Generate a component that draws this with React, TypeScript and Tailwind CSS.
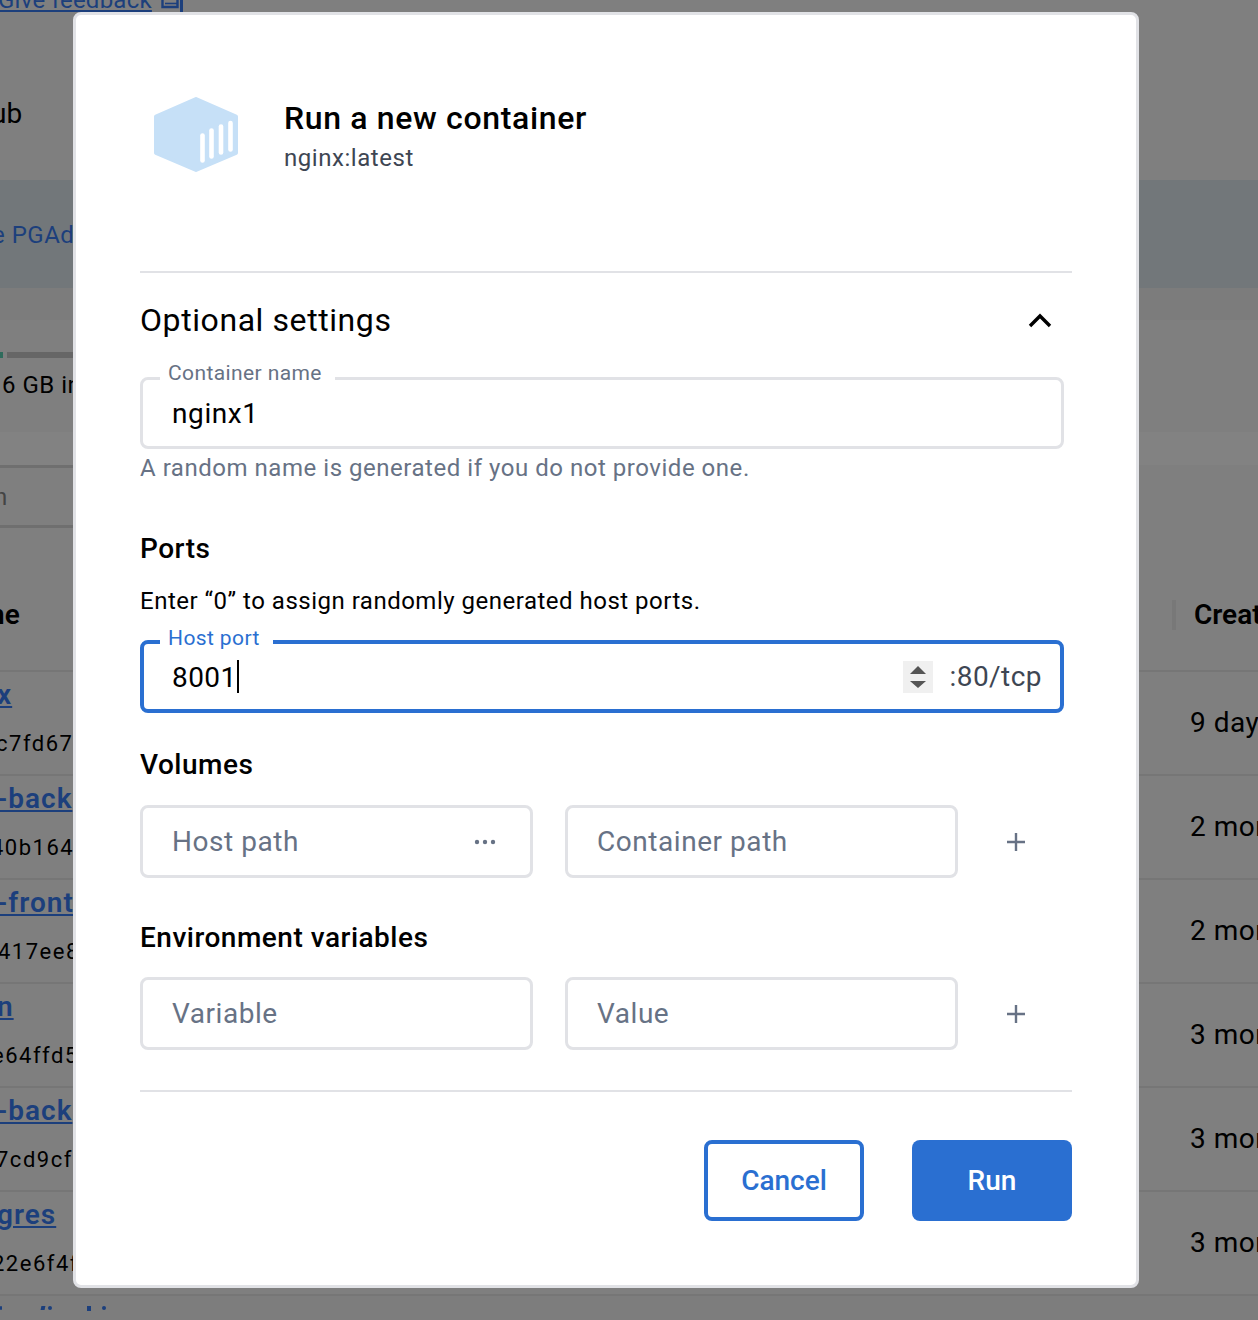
const ROWS = [
  { name: 'x', hash: 'c7fd67', hashClass: '-ml-[4px]', age: '9 days' },
  { name: '-back', hash: '40b164', hashClass: '-ml-[9px]', age: '2 months' },
  { name: '-front', hash: '417ee8', hashClass: '-ml-[2px]', age: '2 months' },
  { name: 'n', hash: 'e64ffd5', hashClass: '-ml-[8px]', age: '3 months' },
  { name: '-back', hash: '7cd9cf', hashClass: '-ml-[4px]', age: '3 months' },
  { name: 'gres', hash: '22e6f4f', hashClass: '-ml-[8px]', age: '3 months' },
];

function TableRow({ name, hash, hashClass, age }: { name: string; hash: string; hashClass: string; age: string }) {
  return (
    <div className="h-[104px] flex justify-between border-b-2 border-[#767676]">
      <div className="w-[73px] overflow-hidden whitespace-nowrap">
        <div className="h-[54px] pt-[5px] -ml-[3px] leading-[36px] text-[28px] font-semibold tracking-[1px] text-[#1c3f7c] underline">{name}</div>
        <div className={`h-[36px] leading-[36px] text-[22px] tracking-[1.5px] text-black ${hashClass}`}>{hash}</div>
      </div>
      <div className="w-[68px] overflow-hidden whitespace-nowrap pt-[33px] leading-[36px] text-[28px] tracking-[0.5px] text-black">{age}</div>
    </div>
  );
}

// Dimmed page that sits behind the dialog
function Backdrop() {
  return (
    <div className="bg-[#7f7f7f] h-[1320px] overflow-hidden">
      <div className="h-[180px]">
        <div className="h-[12px] overflow-hidden flex items-end">
          <span className="-ml-[2px] -mb-[3px] leading-[30px] text-[24px] tracking-[0.25px] text-[#1c3f7c] underline whitespace-nowrap">Give feedback</span>
          <svg width="22" height="12" viewBox="0 0 22 12" className="ml-[9px] shrink-0">
            <path d="M1.5 0v7h15V0" fill="none" stroke="#1c3f7c" strokeWidth="2.4" />
            <path d="M20.5 0v12" stroke="#1c3f7c" strokeWidth="3" />
            <path d="M4 3.5h12" stroke="#1c3f7c" strokeWidth="1.6" />
          </svg>
        </div>
        <div className="mt-[84px] -ml-[9px] leading-[36px] text-[28px] text-black">ub</div>
      </div>
      <div className="h-[108px] pt-[2px] bg-[#72777a] flex items-center">
        <span className="text-[24px] tracking-[0.5px] text-[#1c3f7c] -ml-[8px] whitespace-nowrap">e PGAd</span>
      </div>
      <div className="h-[32px] bg-[#7c7c7c]" />
      <div className="h-[112px] pt-[32px]">
        <div className="flex gap-[4px] h-[6px] w-[73px]">
          <div className="w-[3px] bg-[#2f6b5c]" />
          <div className="flex-1 bg-[#666666]" />
        </div>
        <div className="mt-[9px] ml-[2px] leading-[36px] text-[24px] tracking-[0.5px] text-black whitespace-nowrap">6 GB in</div>
      </div>
      <div className="h-[33px] bg-[#828282]" />
      <div className="h-[63px] w-[73px] border-y-[3px] border-[#6f6f6f] flex items-center">
        <span className="text-[24px] text-[#444444] -ml-[6px]">n</span>
      </div>
      <div className="h-[144px] flex justify-between items-center border-b-2 border-[#767676] pt-[31px]">
        <span className="text-[28px] font-semibold text-black -ml-[11px]">ne</span>
        <div className="flex items-center w-[86px] overflow-hidden whitespace-nowrap">
          <div className="w-[4px] h-[30px] mr-[18px] shrink-0 bg-[#787878]" />
          <span className="text-[28px] font-semibold text-black">Creat</span>
        </div>
      </div>
      {ROWS.map((row, i) => (
        <TableRow key={i} {...row} />
      ))}
      {/* tops of the next row's link, cut off by the scroll area */}
      <div className="h-[24px] bg-[#7d7d7d] pt-[10px] flex items-start">
        <div className="w-[2px] h-[4px] rounded-full bg-[#1c3f7c]" />
        <div className="ml-[39px] w-[4px] h-[4px] -skew-x-12 bg-[#1c3f7c]" />
        <div className="ml-[3px] w-[4px] h-[4px] rounded-full bg-[#1c3f7c]" />
        <div className="ml-[35px] w-[4px] h-[5px] bg-[#1c3f7c]" />
        <div className="ml-[11px] w-[4px] h-[4px] rounded-full bg-[#1c3f7c]" />
      </div>
    </div>
  );
}

function LabelledBox({ label, focused, children }: { label: string; focused?: boolean; children: React.ReactNode }) {
  return (
    <div className={focused ? 'relative h-[73px] rounded-[8px] border-[4px] border-[#2a6fd1] flex items-center pl-[28px] pr-[18px]' : 'relative h-[72px] rounded-[8px] border-[3px] border-[#e1e2e6] flex items-center pl-[29px] pr-[18px]'}>
      <span className={focused ? 'absolute left-[16px] -top-[19px] pl-[8px] pr-[13px] bg-white leading-[26px] text-[21px] tracking-[0.4px] text-[#2a6fd1]' : 'absolute left-[17px] -top-[20px] pl-[8px] pr-[13px] bg-white leading-[26px] text-[21px] tracking-[0.4px] text-[#677285]'}>
        {label}
      </span>
      {children}
    </div>
  );
}

function PathInput({ placeholder, dots }: { placeholder: string; dots?: boolean }) {
  return (
    <div className="w-[393px] h-[73px] rounded-[8px] border-[3px] border-[#e1e2e6] flex items-center justify-between pl-[29px] pr-[34px]">
      <span className="text-[28px] tracking-[0.55px] text-[#677285]">{placeholder}</span>
      {dots && (
        <svg width="22" height="6" viewBox="0 0 22 6">
          <circle cx="3" cy="3" r="2.2" fill="#677285" />
          <circle cx="11" cy="3" r="2.2" fill="#677285" />
          <circle cx="19" cy="3" r="2.2" fill="#677285" />
        </svg>
      )}
    </div>
  );
}

function PathRow({ first, second, dots }: { first: string; second: string; dots?: boolean }) {
  return (
    <div className="flex items-center gap-[32px]">
      <PathInput placeholder={first} dots={dots} />
      <PathInput placeholder={second} />
      <svg width="20" height="20" viewBox="0 0 20 20" className="ml-[16px]">
        <path d="M10 1v18M1 10h18" stroke="#677285" strokeWidth="2.4" />
      </svg>
    </div>
  );
}

function SectionTitle({ children, className }: { children: React.ReactNode; className: string }) {
  return <div className={`h-[36px] leading-[36px] text-[28px] font-medium tracking-[0.5px] text-black ${className}`}>{children}</div>;
}

export default function App() {
  return (
    <div className="relative h-[1320px] overflow-hidden font-['Roboto',sans-serif]">
      <Backdrop />

      {/* Dialog */}
      <div className="absolute left-[73px] top-[12px] w-[1066px] h-[1276px] bg-white border-[3px] border-[#e1e2e6] rounded-[8px] px-[64px]">
        <div className="h-[256px] pt-[82px] flex items-start">
          <svg width="84" height="75" viewBox="0 0 84 75" className="ml-[14px] shrink-0">
            <path d="M42 2 82 19.5V56L42 73 2 56V19.5Z" fill="#c6e0f7" stroke="#c6e0f7" strokeWidth="4" strokeLinejoin="round" />
            <g stroke="#ffffff" strokeWidth="4.6" strokeLinecap="round">
              <line x1="48.5" y1="38.5" x2="48.5" y2="63.5" />
              <line x1="57.5" y1="33.5" x2="57.5" y2="59.5" />
              <line x1="67" y1="29.5" x2="67" y2="55.5" />
              <line x1="76.5" y1="26" x2="76.5" y2="52.5" />
            </g>
          </svg>
          <div className="ml-[46px] -mt-[1px]">
            <div className="h-[44px] leading-[44px] text-[32px] font-medium tracking-[0.65px] text-black">Run a new container</div>
            <div className="leading-[36px] text-[24px] tracking-[0.55px] text-[#3e4653]">nginx:latest</div>
          </div>
        </div>

        <div className="h-[2px] bg-[#e1e2e6]" />

        <div className="h-[94px] flex items-center justify-between pr-[20px]">
          <span className="text-[32px] tracking-[0.58px] text-black">Optional settings</span>
          <svg width="24" height="15" viewBox="0 0 24 15">
            <path d="M2 13 12 3l10 10" fill="none" stroke="#000000" strokeWidth="3.4" />
          </svg>
        </div>

        <div className="mt-[10px] w-[924px]">
          <LabelledBox label="Container name">
            <span className="mt-[1px] text-[28px] tracking-[0.6px] text-black">nginx1</span>
          </LabelledBox>
        </div>
        <div className="h-[38px] leading-[38px] text-[24px] tracking-[0.53px] text-[#677285]">A random name is generated if you do not provide one.</div>

        <SectionTitle className="mt-[44px]">Ports</SectionTitle>
        <div className="mt-[16px] h-[36px] leading-[36px] text-[24px] tracking-[0.5px] text-black">Enter “0” to assign randomly generated host ports.</div>

        <div className="mt-[21px] w-[924px]">
          <LabelledBox label="Host port" focused>
            <span className="mt-[2px] text-[28px] tracking-[0.4px] text-black">8001</span>
            <span className="w-[2px] h-[33px] bg-black" />
            <div className="ml-auto w-[30px] h-[32px] bg-[#f0f0f0] flex items-center justify-center">
              <svg width="16" height="22" viewBox="0 0 16 22">
                <path d="M8 0 16 8H0Z M0 15H16L8 22Z" fill="#555555" />
              </svg>
            </div>
            <span className="ml-[17px] mt-[1px] text-[28px] tracking-[0.45px] text-[#3e4653]">:80/tcp</span>
          </LabelledBox>
        </div>

        <SectionTitle className="mt-[34px]">Volumes</SectionTitle>
        <div className="mt-[22px]">
          <PathRow first="Host path" second="Container path" dots />
        </div>

        <SectionTitle className="mt-[42px]">Environment variables</SectionTitle>
        <div className="mt-[21px]">
          <PathRow first="Variable" second="Value" />
        </div>

        <div className="mt-[40px] h-[2px] bg-[#e1e2e6]" />

        <div className="mt-[48px] flex justify-end gap-[48px]">
          <button className="w-[160px] h-[81px] rounded-[8px] border-[4px] border-[#2a6fd1] bg-white text-[28px] font-medium text-[#2a6fd1]">Cancel</button>
          <button className="w-[160px] h-[81px] rounded-[8px] bg-[#2a6fd1] text-[28px] font-medium text-white">Run</button>
        </div>
      </div>
    </div>
  );
}
